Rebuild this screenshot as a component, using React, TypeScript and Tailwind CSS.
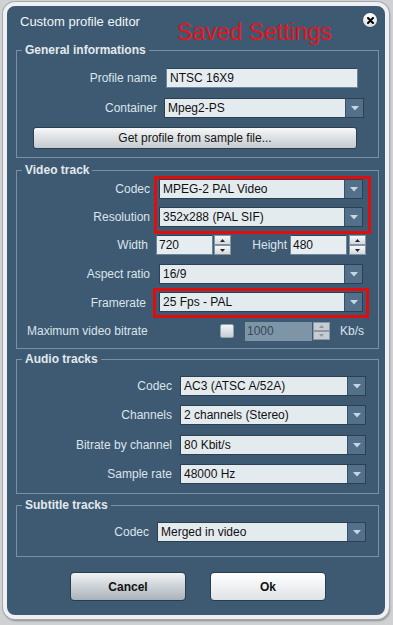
import React from "react";

const Arrow = () => (
  <svg width="8" height="5" viewBox="0 0 8 5">
    <path d="M0 0 H8 L4 4.5 Z" fill="#c9d5df" />
  </svg>
);

const Select = ({ value, className }: { value: string; className: string }) => (
  <div className={`flex h-[20px] border border-[#2c4052] ${className}`}>
    <div className="flex flex-1 items-center bg-[#e4ebef] pl-[3px] text-[12px] leading-none text-[#101010]">
      {value}
    </div>
    <div className="flex w-[18px] items-center justify-center border-l border-[#3a4f61] bg-[#52708a]">
      <Arrow />
    </div>
  </div>
);

const Spinner = ({ disabled }: { disabled?: boolean }) => {
  const btn = disabled
    ? "flex h-[9px] items-center justify-center border border-[#8c9aa6] bg-[#c6ccd1]"
    : "flex h-[10px] items-center justify-center border border-[#8393a1] bg-gradient-to-b from-[#f7f8f9] to-[#d4d9dd]";
  const fill = disabled ? "#8c97a0" : "#222";
  return (
    <div className="flex w-[17px] flex-col justify-center">
      <div className={btn}>
        <svg width="5" height="3" viewBox="0 0 5 3">
          <path d="M0 3 H5 L2.5 0 Z" fill={fill} />
        </svg>
      </div>
      <div className={btn}>
        <svg width="5" height="3" viewBox="0 0 5 3">
          <path d="M0 0 H5 L2.5 3 Z" fill={fill} />
        </svg>
      </div>
    </div>
  );
};

const Group = ({
  title,
  className,
  children,
}: {
  title: string;
  className: string;
  children: React.ReactNode;
}) => (
  <fieldset className={`ml-[9px] w-[363px] border border-[#7891a6] ${className}`}>
    <legend className="ml-[5px] px-[3px] text-[12px] font-bold leading-[12px] text-[#e2e9ee]">
      {title}
    </legend>
    {children}
  </fieldset>
);

const Label = ({ text, className }: { text: string; className: string }) => (
  <span className={`shrink-0 text-right text-[12px] text-[#dbe4eb] ${className}`}>{text}</span>
);

export default function App() {
  return (
    <div className="h-[625px] w-[393px] overflow-hidden bg-[#cfd1d3] pt-[2px] font-['Liberation_Sans',Arial,sans-serif]">
      <div className="ml-[3px] flex h-[617px] w-[386px] flex-col rounded-[12px] border-[4px] border-[#eef0f2] bg-[#3e5a72] shadow-[0_0_0_1px_#a3a8ad,1px_2px_2px_#8a8f94]">
        {/* title bar */}
        <div className="flex h-[38px] shrink-0 items-start">
          <span className="w-[170px] shrink-0 pl-[13px] pt-[8px] text-[13px] leading-[16px] text-[#f2f5f7]">
            Custom profile editor
          </span>
          <span className="pt-[13px] text-[23px] leading-[26px] text-[#e8131b]">Saved Settings</span>
          <div className="ml-auto mr-[8px] mt-[7px] flex h-[14px] w-[14px] items-center justify-center rounded-full bg-gradient-to-b from-white to-[#d9dde0] shadow-[0_0_1px_#1a2a38]">
            <svg width="7" height="7" viewBox="0 0 7 7">
              <path d="M1 1 L6 6 M6 1 L1 6" stroke="#000" strokeWidth="2" strokeLinecap="round" />
            </svg>
          </div>
        </div>

        <Group title="General informations" className="pb-[8px]">
          <div className="flex items-center pt-[12px]">
            <Label text="Profile name" className="w-[140px]" />
            <div className="ml-[9px] flex h-[20px] w-[192px] items-center border border-[#6d869b] border-t-[#2e4253] bg-[#e6edf1] pl-[3px] text-[12px] text-[#101010]">
              NTSC 16X9
            </div>
          </div>
          <div className="mt-[10px] flex items-center">
            <Label text="Container" className="w-[140px]" />
            <Select value="Mpeg2-PS" className="ml-[7px] w-[200px]" />
          </div>
          <button className="ml-[16px] mt-[9px] flex h-[22px] w-[324px] items-center justify-center rounded-[3px] border border-[#2d4050] bg-gradient-to-b from-[#f6f7f8] to-[#c4cacf] text-[12px] text-[#151515]">
            Get profile from sample file...
          </button>
        </Group>

        <Group title="Video track" className="mt-[6px] pb-[8px]">
          <div className="flex items-start">
            <div className="flex w-[133px] shrink-0 flex-col">
              <Label text="Codec" className="mt-[3px] leading-[20px]" />
              <Label text="Resolution" className="mt-[8px] leading-[20px]" />
            </div>
            <div className="ml-[4px] w-[217px] border-[3px] border-[#e10c0c] pb-[4px] pl-[2px]">
              <Select value="MPEG-2 PAL Video" className="w-[204px]" />
              <Select value="352x288 (PAL SIF)" className="mt-[8px] w-[204px]" />
            </div>
          </div>
          <div className="mt-[1px] flex h-[20px] items-stretch">
            <Label text="Width" className="w-[131px] self-center" />
            <div className="ml-[8px] flex w-[57px] items-center border border-[#6d869b] border-t-[#2e4253] bg-[#e6edf1] pl-[2px] text-[12px] text-[#101010]">
              720
            </div>
            <div className="ml-[1px] flex">
              <Spinner />
            </div>
            <Label text="Height" className="ml-[21px] w-[35px] self-center" />
            <div className="ml-[3px] flex w-[57px] items-center border border-[#6d869b] border-t-[#2e4253] bg-[#e6edf1] pl-[2px] text-[12px] text-[#101010]">
              480
            </div>
            <div className="ml-[2px] flex">
              <Spinner />
            </div>
          </div>
          <div className="mt-[9px] flex items-center">
            <Label text="Aspect ratio" className="w-[133px]" />
            <Select value="16/9" className="ml-[9px] w-[204px]" />
          </div>
          <div className="mt-[4px] flex items-center">
            <Label text="Framerate" className="w-[129px]" />
            <div className="ml-[7px] w-[216px] border-[3px] border-[#e10c0c] pb-[3px] pl-[3px] pt-[1px]">
              <Select value="25 Fps - PAL" className="w-[204px]" />
            </div>
          </div>
          <div className="mt-[4px] flex h-[18px] items-center">
            <span className="w-[203px] shrink-0 pl-[10px] text-[12px] text-[#dbe4eb]">Maximum video bitrate</span>
            <div className="h-[14px] w-[14px] rounded-[2px] border border-[#8ea2b2] bg-gradient-to-b from-[#f3f5f6] to-[#c6cdd3]" />
            <div className="ml-[11px] flex h-[19px] w-[67px] items-center bg-[#7e94a7] pl-[2px] text-[12px] text-[#34495b]">
              1000
            </div>
            <div className="ml-[1px] flex">
              <Spinner disabled />
            </div>
            <span className="ml-[10px] text-[12px] text-[#dbe4eb]">Kb/s</span>
          </div>
        </Group>

        <Group title="Audio tracks" className="mt-[4px] pb-[9px]">
          <div className="flex items-center pt-[11px]">
            <Label text="Codec" className="w-[155px]" />
            <Select value="AC3 (ATSC A/52A)" className="ml-[8px] w-[186px]" />
          </div>
          <div className="mt-[9px] flex items-center">
            <Label text="Channels" className="w-[155px]" />
            <Select value="2 channels (Stereo)" className="ml-[8px] w-[186px]" />
          </div>
          <div className="mt-[10px] flex items-center">
            <Label text="Bitrate by channel" className="w-[155px]" />
            <Select value="80 Kbit/s" className="ml-[8px] w-[186px]" />
          </div>
          <div className="mt-[9px] flex items-center">
            <Label text="Sample rate" className="w-[155px]" />
            <Select value="48000 Hz" className="ml-[8px] w-[186px]" />
          </div>
        </Group>

        <Group title="Subtitle tracks" className="mt-[5px] pb-[14px]">
          <div className="flex items-center pt-[11px]">
            <Label text="Codec" className="w-[132px]" />
            <Select value="Merged in video" className="ml-[8px] w-[209px]" />
          </div>
        </Group>

        <div className="ml-[63px] mt-[15px] flex gap-[24px]">
          <button className="h-[29px] w-[116px] rounded-[4px] border border-[#2a3c4b] bg-gradient-to-b from-[#f1f3f4] to-[#a9b2ba] text-[12px] font-bold text-[#111]">
            Cancel
          </button>
          <button className="h-[29px] w-[116px] rounded-[4px] border border-[#2a3c4b] bg-gradient-to-b from-white to-[#dfe3e6] text-[12px] font-bold text-[#111]">
            Ok
          </button>
        </div>
      </div>
    </div>
  );
}
